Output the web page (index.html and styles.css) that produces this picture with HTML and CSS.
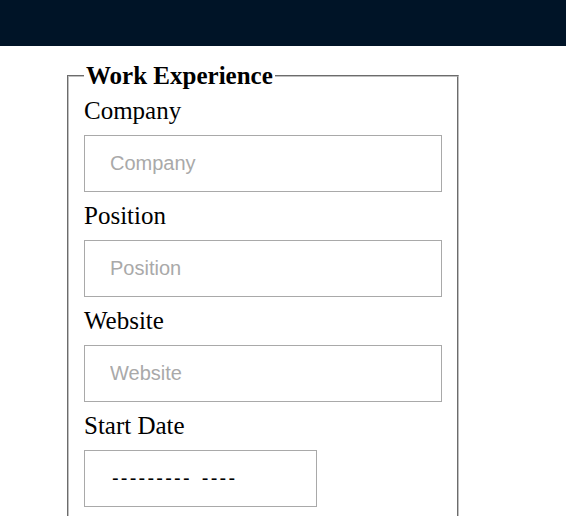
FILE: index.html
```html
<!DOCTYPE html>
<html lang="en">
<head>
<meta charset="utf-8">
<title>Work Experience</title>
<link rel="stylesheet" href="styles.css">
</head>
<body>
<header class="topbar"></header>
<main class="page">
  <form class="form">
    <fieldset class="group">
      <legend class="group-title">Work Experience</legend>
      <label class="field-label" for="company">Company</label>
      <input class="field-input" id="company" type="text" placeholder="Company">
      <label class="field-label" for="position">Position</label>
      <input class="field-input" id="position" type="text" placeholder="Position">
      <label class="field-label" for="website">Website</label>
      <input class="field-input" id="website" type="text" placeholder="Website">
      <label class="field-label" for="start">Start Date</label>
      <input class="field-input field-month" id="start" type="text" placeholder="--------- ----">
    </fieldset>
  </form>
</main>
</body>
</html>
```

FILE: styles.css
```css
html, body {
  margin: 0;
  padding: 0;
  background: #ffffff;
}
body {
  font-family: "Liberation Serif", "Times New Roman", serif;
  font-size: 20px;
  color: #000;
}
.topbar {
  height: 46px;
  background: #001427;
}
.page {
  padding: 16px 0 0 67px;
}
.form {
  margin: 0;
}
.group {
  box-sizing: border-box;
  width: 392px;
  margin: 0;
  padding: 7px 15px 12px;
  border: 2px groove #c0c0c0;
  font-size: 20px;
}
.group-title {
  font-size: 25px;
  line-height: 28px;
  font-weight: bold;
  padding: 0 2px;
}
.field-label {
  display: block;
  font-size: 25px;
  line-height: 28px;
}
.field-input {
  display: block;
  box-sizing: border-box;
  width: 100%;
  height: 57px;
  margin: 10px 0;
  padding: 0 25px;
  border: 1px solid #a9a9a9;
  border-radius: 0;
  font-family: "Liberation Sans", Arial, sans-serif;
  font-size: 20px;
  color: #000;
  background: #fff;
  outline: none;
}
.field-input::placeholder {
  color: #a9a9a9;
  opacity: 1;
}
.field-month {
  width: 233px;
  padding-left: 27px;
  letter-spacing: 2.2px;
  word-spacing: 2.3px;
}
.field-month::placeholder {
  color: #000;
}
```
